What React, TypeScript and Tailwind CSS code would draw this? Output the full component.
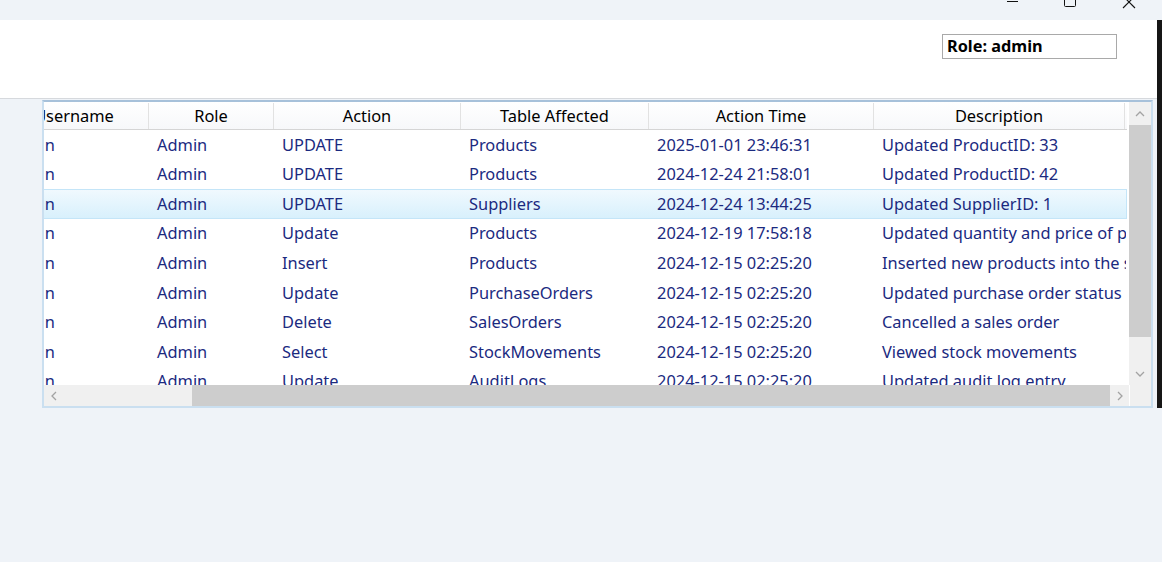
import React from "react"

const columns = [
  { key: "user", label: "Username", width: "w-[149px]" },
  { key: "role", label: "Role", width: "w-[125px]" },
  { key: "action", label: "Action", width: "w-[187px]" },
  { key: "table", label: "Table Affected", width: "w-[188px]" },
  { key: "time", label: "Action Time", width: "w-[225px]" },
  { key: "desc", label: "Description", width: "w-[251px]" },
]

const rows = [
  ["admin", "Admin", "UPDATE", "Products", "2025-01-01 23:46:31", "Updated ProductID: 33"],
  ["admin", "Admin", "UPDATE", "Products", "2024-12-24 21:58:01", "Updated ProductID: 42"],
  ["admin", "Admin", "UPDATE", "Suppliers", "2024-12-24 13:44:25", "Updated SupplierID: 1"],
  ["admin", "Admin", "Update", "Products", "2024-12-19 17:58:18", "Updated quantity and price of product"],
  ["admin", "Admin", "Insert", "Products", "2024-12-15 02:25:20", "Inserted new products into the system"],
  ["admin", "Admin", "Update", "PurchaseOrders", "2024-12-15 02:25:20", "Updated purchase order status"],
  ["admin", "Admin", "Delete", "SalesOrders", "2024-12-15 02:25:20", "Cancelled a sales order"],
  ["admin", "Admin", "Select", "StockMovements", "2024-12-15 02:25:20", "Viewed stock movements"],
  ["admin", "Admin", "Update", "AuditLogs", "2024-12-15 02:25:20", "Updated audit log entry"],
]

const selectedRow = 2

function Chevron({ dir }: { dir: "up" | "down" | "left" | "right" }) {
  const pts = {
    up: "1,6 5,2 9,6",
    down: "1,2 5,6 9,2",
    left: "6,1 2,5 6,9",
    right: "2,1 6,5 2,9",
  }[dir]
  const size = dir === "up" || dir === "down" ? "w-[10px] h-[8px]" : "w-[8px] h-[10px]"
  const vb = dir === "up" || dir === "down" ? "0 0 10 8" : "0 0 8 10"
  return (
    <svg className={size} viewBox={vb} fill="none">
      <polyline points={pts} stroke="#a3a3a3" strokeWidth="1.3" />
    </svg>
  )
}

function WindowControls() {
  return (
    <svg className="h-[20px] w-[160px]" viewBox="0 0 160 20" fill="none">
      <line x1="5" y1="1.5" x2="16" y2="1.5" stroke="#111" strokeWidth="1" />
      <rect x="62.5" y="-5.5" width="11" height="12" rx="1" stroke="#111" strokeWidth="1" />
      <line x1="121" y1="-4" x2="133" y2="8" stroke="#111" strokeWidth="1.1" />
      <line x1="133" y1="-4" x2="121" y2="8" stroke="#111" strokeWidth="1.1" />
    </svg>
  )
}

export default function App() {
  return (
    <div
      className="relative flex h-[562px] w-[1162px] flex-col overflow-hidden bg-[#eff3f8]"
      style={{ fontFamily: '"Noto Sans", "Open Sans", sans-serif' }}
    >
      <div className="flex h-[20px] justify-end">
        <WindowControls />
      </div>

      <div className="flex h-[79px] justify-end border-b border-[#d6d9dd] bg-white pr-[45px] pt-[14px]">
        <div className="flex h-[25px] w-[175px] items-center border border-[#a9a9a9] px-[4px] text-[16.3px] font-bold leading-none text-black">
          Role: admin
        </div>
      </div>

      <div className="ml-[42px] mt-[1px] grid h-[308px] w-[1111px] grid-cols-[1fr_22px] grid-rows-[1fr_21px] border-2 border-[#cadff0] border-t-[#a7c1da] bg-white">
        <div className="overflow-hidden">
          <div className="ml-[-44px] w-max text-[16.4px] leading-none">
            <div className="flex h-[28px] border-b border-[#d5d5d5] bg-gradient-to-b from-white to-[#f7f8fa] pt-[1px]">
              {columns.map((c) => (
                <div
                  key={c.key}
                  className={`${c.width} flex items-center justify-center border-r border-[#e2e2e2] text-black`}
                >
                  {c.label}
                </div>
              ))}
            </div>
            {rows.map((r, i) => (
              <div
                key={i}
                className={`flex h-[29.6px] border ${
                  i === selectedRow
                    ? "border-[#c4e5f8] bg-gradient-to-b from-[#f0f9fe] to-[#d8f0fc]"
                    : "border-transparent"
                }`}
              >
                {r.map((v, j) => (
                  <div
                    key={j}
                    className={`${columns[j].width} flex items-center overflow-hidden whitespace-nowrap ${
                      j === 0 ? "pl-[5px]" : "pl-[7px]"
                    } text-[#1b2a7f]`}
                  >
                    {v}
                  </div>
                ))}
              </div>
            ))}
          </div>
        </div>

        <div className="flex flex-col bg-[#f0f0f0]">
          <div className="flex h-[23px] items-center justify-center">
            <Chevron dir="up" />
          </div>
          <div className="h-[212px] bg-[#cdcdcd]" />
          <div className="flex-1" />
          <div className="flex h-[22px] items-center justify-center">
            <Chevron dir="down" />
          </div>
        </div>

        <div className="flex bg-[#f0f0f0]">
          <div className="flex w-[19px] items-center justify-center">
            <Chevron dir="left" />
          </div>
          <div className="w-[129px]" />
          <div className="flex-1 bg-[#cdcdcd]" />
          <div className="flex w-[19px] items-center justify-center">
            <Chevron dir="right" />
          </div>
        </div>
        <div className="border-l border-white bg-[#f0f0f0]" />
      </div>

      <div className="absolute right-0 top-[20px] h-[388px] w-[5px] bg-[#161616]" />
    </div>
  )
}
